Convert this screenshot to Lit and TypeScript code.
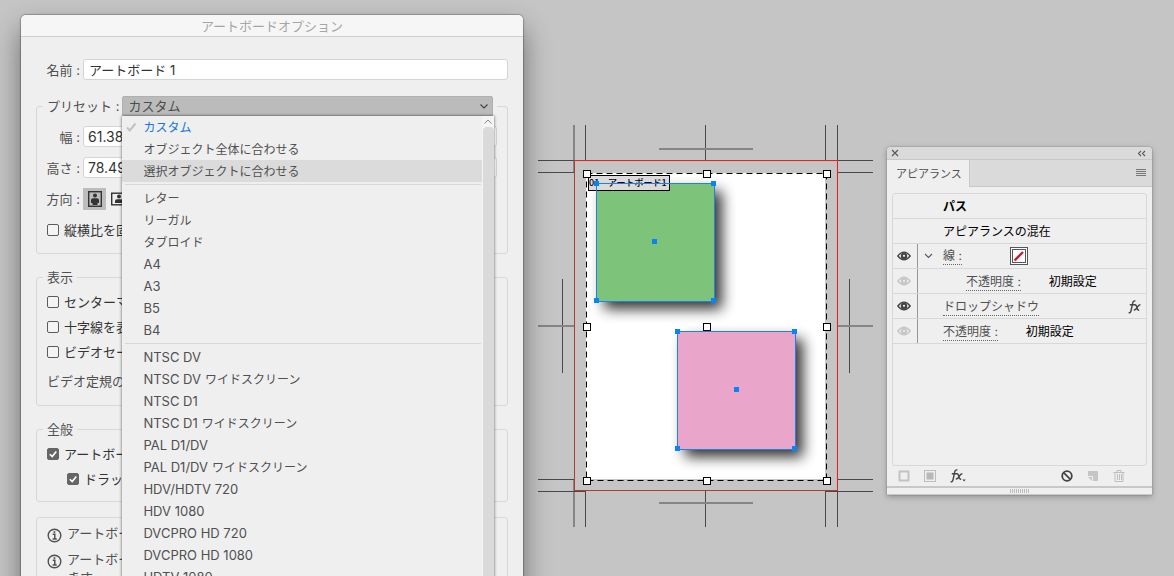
import { LitElement, html, css, svg } from "lit";
import { customElement } from "lit/decorators.js";
import { classMap } from "lit/directives/class-map.js";

const FONT = css`Inter, "Noto Sans CJK JP", sans-serif`;

@customElement("artboard-canvas")
class ArtboardCanvas extends LitElement {
  static styles = css`
    :host { display: block; }
    svg { display: block; width: 350px; height: 420px; }
    .thin { stroke: #4a4848; stroke-width: 1; }
    .thick { stroke: #868484; stroke-width: 2; }
    .bleed { fill: none; stroke: #b23a36; stroke-width: 1; }
    .glow { fill: none; stroke: #f3a9a5; stroke-width: 1; }
    .page { fill: #fff; }
    .dash { fill: none; stroke: #000; stroke-width: 1; stroke-dasharray: 6 4; }
    .handle { fill: #fff; stroke: #000; stroke-width: 1; }
    .sel { fill: none; stroke: #1a82e8; stroke-width: 1; }
    .pin { fill: #0a84f5; }
    .green { fill: #7dc379; }
    .pink { fill: #eaa6ca; }
    .tag { fill: #dcdadb; stroke: #000; stroke-width: 1; }
    .tagtext { font: 500 9px "Noto Sans CJK JP", sans-serif; fill: #000; }
    .shade { fill: #000; opacity: 0.8; }
  `;

  private marks: [string, number, number, number, number][] = [
    ["thick", 574, 125, 574, 172], ["thin", 585.5, 125, 585.5, 160],
    ["thin", 705.5, 125, 705.5, 160], ["thin", 825.5, 125, 825.5, 160],
    ["thin", 837.5, 125, 837.5, 160], ["thick", 659, 149, 753, 149],
    ["thin", 538, 160.5, 574, 160.5], ["thin", 538, 172.5, 574, 172.5],
    ["thin", 838, 160.5, 873, 160.5], ["thin", 838, 172.5, 873, 172.5],
    ["thick", 574, 480, 574, 527], ["thin", 585.5, 491, 585.5, 527],
    ["thin", 705.5, 491, 705.5, 527], ["thin", 825.5, 491, 825.5, 527],
    ["thin", 837.5, 491, 837.5, 527], ["thick", 659, 503, 753, 503],
    ["thin", 538, 479.5, 574, 479.5], ["thin", 538, 491.5, 586, 491.5],
    ["thin", 838, 479.5, 873, 479.5], ["thin", 826, 491.5, 873, 491.5],
    ["thin", 562.5, 279, 562.5, 373], ["thick", 538, 326, 574, 326],
    ["thin", 849.5, 279, 849.5, 373], ["thick", 838, 326, 873, 326],
  ];

  private fill(kind: string, x: number, y: number) {
    return svg`
      <rect class="shade" x=${x + 7} y=${y + 7} width="118" height="118" filter="url(#soft)"></rect>
      <rect class=${kind} x=${x} y=${y} width="118" height="118"></rect>`;
  }
  private outline(x: number, y: number, mid: number) {
    const pins = [[0, 0], [117, 0], [0, 117], [117, 117], [mid, 58]];
    return svg`
      <rect class="sel" x=${x - 0.5} y=${y - 0.5} width="118" height="118"></rect>
      ${pins.map(([dx, dy]) => svg`<rect class="pin" x=${x + dx - 3} y=${y + dy - 3} width="5" height="5"></rect>`)}`;
  }

  render() {
    return html`<svg viewBox="530 115 350 420" role="img" aria-label="アートボード 1">
      <defs>
        <filter id="soft" x="-20%" y="-20%" width="140%" height="140%">
          <feGaussianBlur stdDeviation="7"></feGaussianBlur>
        </filter>
      </defs>
      ${this.marks.map(([c, a, b, d, e]) => svg`<line class=${c} x1=${a} y1=${b} x2=${d} y2=${e}></line>`)}
      <path class="glow" d="M575 161.5H836.5V490"></path>
      <rect class="bleed" x="574.5" y="160.5" width="263" height="330"></rect>
      <rect class="page" x="586" y="173" width="239" height="306"></rect>
      ${this.fill("green", 597, 184)}
      ${this.fill("pink", 678, 332)}
      <rect class="tag" x="588.5" y="175.5" width="81" height="15"></rect>
      <text class="tagtext" x="589" y="186">01</text>
      <text class="tagtext" x="608" y="186">アートボード1</text>
      ${this.outline(597, 184, 58)}
      ${this.outline(678, 332, 59)}
      <rect class="dash" x="586.5" y="173.5" width="240" height="307"></rect>
      ${[[587, 174], [707, 174], [827, 174], [587, 327], [707, 327], [827, 327], [587, 481], [707, 481], [827, 481]].map(([x, y]) =>
        svg`<rect class="handle" x=${x - 3.5} y=${y - 3.5} width="7" height="7"></rect>`)}
    </svg>`;
  }
}

@customElement("preset-menu")
class PresetMenu extends LitElement {
  static styles = css`
    :host { display: flex; background: #efefef; box-shadow: 0 0 3px rgba(0, 0, 0, 0.6); font: 12px/22px ${FONT}; color: #505050; }
    .list { flex: 1; margin: 0; padding: 0; list-style: none; }
    .item { display: flex; align-items: center; gap: 4px; height: 22px; padding-left: 3px; white-space: nowrap; }
    .mark { width: 14px; height: 12px; }
    .latin { font-size: 13px; }
    .kana { padding-top: 2px; }
    .on { color: #1576dc; }
    .hover { background: #dbdbdb; }
    .rule { height: 1px; margin: 2px 1px 2px 3px; background: #d8d8d8; }
    .track { display: flex; flex-direction: column; width: 12px; background: #f4f4f4; }
    .up { height: 11px; width: 12px; }
    .thumb { flex: 1; margin-left: 1px; border-radius: 4px 4px 0 0; background: #dadada; }
  `;

  private groups: string[][][] = [
    [["", "カスタム"], ["", "オブジェクト全体に合わせる"], ["", "選択オブジェクトに合わせる"]],
    [["", "レター"], ["", "リーガル"], ["", "タブロイド"], ["A4"], ["A3"], ["B5"], ["B4"]],
    [["NTSC DV"], ["NTSC DV", "ワイドスクリーン"], ["NTSC D1"], ["NTSC D1", "ワイドスクリーン"], ["PAL D1/DV"],
      ["PAL D1/DV", "ワイドスクリーン"], ["HDV/HDTV 720"], ["HDV 1080"], ["DVCPRO HD 720"], ["DVCPRO HD 1080"], ["HDTV 1080"]],
  ];

  render() {
    return html`
      <ul class="list" role="listbox" aria-label="プリセット">
        ${this.groups.map((g, gi) => html`
          ${gi ? html`<li class="rule" role="separator"></li>` : ""}
          ${g.map(([latin, kana], i) => html`<li role="option" aria-selected=${gi + i === 0}
            class=${classMap({ item: true, on: gi === 0 && i === 0, hover: gi === 0 && i === 2 })}>
            <svg class="mark" viewBox="0 0 14 12">${gi === 0 && i === 0
              ? svg`<path d="M2 6.5L4.8 9.5L10.5 2.5" fill="none" stroke="#c2c2c2" stroke-width="2"></path>` : ""}</svg>
            ${latin ? html`<span class="latin">${latin}</span>` : ""}${kana ? html`<span class="kana">${kana}</span>` : ""}</li>`)}`)}
      </ul>
      <div class="track">
        <svg class="up" viewBox="0 0 12 11"><path d="M2.5 7.5L6 4L9.5 7.5" fill="none" stroke="#8a8a8a"></path></svg>
        <div class="thumb"></div>
      </div>`;
  }
}

@customElement("artboard-dialog")
class ArtboardDialog extends LitElement {
  static styles = css`
    :host { display: block; background: #efefef; border-radius: 5px 5px 0 0; font: 13px/20px ${FONT}; color: #505050;
      box-shadow: 0 0 1px 1px rgba(0, 0, 0, 0.25), 0 14px 28px rgba(0, 0, 0, 0.45); }
    * { box-sizing: border-box; }
    .title { margin: 0; height: 22px; border-bottom: 1px solid #cfcfcf; border-radius: 5px 5px 0 0; background: #f6f6f6;
      font-size: 13px; line-height: 22px; font-weight: 400; text-align: center; color: #a6a6a6; }
    .body { display: flex; flex-direction: column; padding: 22px 15px; }
    .row { display: flex; align-items: center; height: 21px; }
    .cap { width: 47px; padding-right: 3px; text-align: right; white-space: nowrap; }
    .in .cap { width: 46px; }
    .in .row { padding-right: 10px; }
    .box { flex: 1; min-width: 0; height: 21px; padding: 0 5px; border: 1px solid #d4d4d4; border-radius: 3px; background: #fff;
      font: inherit; color: #333; }
    .num { padding: 0 4px; font-size: 14px; }
    .group { min-width: 0; margin: 0; border: 1px solid #d8d8d8; border-radius: 3px; padding: 0; }
    .g1 { margin-top: 16px; }
    .g2, .g3 { margin-top: 13px; }
    .in { display: flex; flex-direction: column; gap: 10px; padding-top: 10px; }
    .legend { height: 20px; margin-left: 6px; padding: 0 4px; }
    .wide { width: calc(100% - 16px); }
    .pick { display: flex; align-items: center; gap: 3px; white-space: nowrap; }
    .field { position: relative; flex: 1; display: flex; }
    .select { flex: 1; appearance: none; height: 20px; margin: 0; padding: 0 5px; border: 1px solid #b0b0b0; border-radius: 2px 2px 0 0;
      background: #bbb; font: inherit; line-height: 18px; color: #4c4c4c; }
    .arrow { position: absolute; right: 4px; top: 5px; width: 10px; height: 10px; pointer-events: none; }
    .menu { position: absolute; z-index: 2; left: 0; right: -1px; top: 20px; }
    .btn { width: 23px; height: 22px; padding: 0; border: 0; background: none; }
    .btn.on { background: #bdbdbd; }
    .btn svg { display: block; margin: auto; }
    .check { display: flex; align-items: center; gap: 5px; height: 20px; padding-left: 10px; white-space: nowrap; overflow: hidden; color: #333; }
    .tick { appearance: none; flex: none; width: 12px; height: 12px; margin: 0; border: 1px solid #5c5c5c; border-radius: 2px; background: #f4f4f4; }
    .tick:checked { border-color: #666; background: #666 url("data:image/svg+xml,%3Csvg xmlns='http://www.w3.org/2000/svg' viewBox='0 0 10 10'%3E%3Cpath d='M1.8 5.2L4.2 7.6L8.3 2.4' fill='none' stroke='white' stroke-width='1.6'/%3E%3C/svg%3E"); }
    .lock { margin-top: 11px; margin-bottom: 13px; }
    .stack { display: flex; flex-direction: column; gap: 5px; }
    .show { padding-top: 5px; padding-bottom: 14px; }
    .note { margin: 4px 0 0; padding-left: 10px; height: 20px; }
    .general { padding-top: 5px; padding-bottom: 12px; }
    .sub { padding-left: 30px; }
    .info { display: flex; flex-direction: column; gap: 7px; margin-top: 15px; padding: 6px 10px 10px; }
    .hint { display: flex; gap: 5px; margin: 0; line-height: 18px; }
    .hint svg { flex: none; margin-top: 4px; }
  `;

  private tick(text: string, on = false, extra = "") {
    return html`<label class="check ${extra}"><input class="tick" type="checkbox" ?checked=${on}>${text}</label>`;
  }
  private hint(text: string) {
    return html`<p class="hint"><svg width="15" height="15" viewBox="0 0 15 15" fill="none" stroke="#505050">
      <circle cx="7.5" cy="7.5" r="6.3" stroke-width="1.4"></circle>
      <path d="M5.7 6.2H7.8V11M5.6 11H9.8" stroke-width="1.5"></path><path d="M6.6 4H8.3" stroke-width="1.7"></path></svg>
      <span>${text}</span></p>`;
  }

  render() {
    return html`
      <h1 class="title">アートボードオプション</h1>
      <form class="body">
        <div class="row"><label class="cap" for="name">名前 :</label><input class="box" id="name" value="アートボード 1"></div>
        <fieldset class="group g1">
          <legend class="legend wide"><div class="pick"><label for="preset">プリセット :</label>
            <div class="field">
              <select class="select" id="preset"><option>カスタム</option></select>
              <svg class="arrow" viewBox="0 0 10 10"><path d="M1.5 3.5L5 7L8.5 3.5" fill="none" stroke="#444" stroke-width="1.2"></path></svg>
              <preset-menu class="menu"></preset-menu>
            </div></div></legend>
          <div class="in">
            <div class="row"><label class="cap" for="w">幅 :</label><input class="box num" id="w" value="61.383 mm"></div>
            <div class="row"><label class="cap" for="h">高さ :</label><input class="box num" id="h" value="78.493 mm"></div>
            <div class="row"><span class="cap">方向 :</span>
              <button class="btn on" type="button" aria-label="縦"><svg width="14" height="16" viewBox="0 0 14 16">
                <rect x="0.7" y="0.7" width="12.6" height="14.6" fill="none" stroke="#333" stroke-width="1.4"></rect>
                <circle cx="7" cy="4.6" r="2" fill="#333"></circle><path d="M3 9Q3 7.2 5 7.2H9Q11 7.2 11 9V12H9.5V14H4.5V12H3Z" fill="#333"></path></svg></button>
              <button class="btn" type="button" aria-label="横"><svg width="14" height="14" viewBox="0 0 14 14">
                <rect x="0.7" y="1.2" width="12.6" height="11.6" fill="none" stroke="#333" stroke-width="1.4"></rect>
                <circle cx="8" cy="4.6" r="2" fill="#333"></circle><path d="M4 9Q4 7.2 6 7.2H10Q12 7.2 12 9V11H4Z" fill="#333"></path></svg></button>
            </div>
          </div>
          ${this.tick("縦横比を固定", false, "lock")}
        </fieldset>
        <fieldset class="group g2"><legend class="legend">表示</legend>
          <div class="stack show">
            ${this.tick("センターマークを表示")}${this.tick("十字線を表示")}${this.tick("ビデオセーフエリアを表示")}
            <p class="note">ビデオ定規のピクセル縦横比 : 1</p>
          </div>
        </fieldset>
        <fieldset class="group g3"><legend class="legend">全般</legend>
          <div class="stack general">
            ${this.tick("アートボード以外の領域を暗くする", true)}${this.tick("ドラッグ中に更新", true, "sub")}
          </div>
        </fieldset>
        <section class="group info">
          ${this.hint("アートボード内に作成するには、Shift キーを押します。")}
          ${this.hint("アートボードをアートボードパネルでクリックすると、アクティブになります。")}
        </section>
      </form>`;
  }
}

@customElement("appearance-panel")
class AppearancePanel extends LitElement {
  static styles = css`
    :host { display: flex; flex-direction: column; box-sizing: border-box; background: #efefef; border-radius: 4px 4px 0 0;
      font: 12px/24px ${FONT}; color: #505050; box-shadow: 0 0 2px rgba(0, 0, 0, 0.3), 0 2px 6px rgba(0, 0, 0, 0.25); }
    * { box-sizing: border-box; }
    svg { display: block; }
    button { display: flex; padding: 0; border: 0; background: none; color: inherit; font: inherit; }
    .bar { display: flex; align-items: center; justify-content: space-between; height: 13px; padding: 0 6px 0 4px;
      border-bottom: 1px solid #c8c8c8; border-radius: 4px 4px 0 0; background: #dadada; }
    .tabs { display: flex; align-items: center; justify-content: space-between; height: 27px; padding-right: 6px; background: #dadada;
      border-bottom: 1px solid #c8c8c8; }
    .tab { height: 27px; width: 83px; align-items: center; padding: 2px 0 0 9px; border-right: 1px solid #c8c8c8; background: #efefef; font-size: 11px; white-space: nowrap; }
    .list { flex: 1; margin: 6px 5px 0; padding: 0; list-style: none; border: 1px solid #d8d8d8; border-radius: 3px; }
    .item { display: flex; height: 25px; border-bottom: 1px solid #d8d8d8; color: #000; white-space: nowrap; }
    .eye { display: flex; align-items: center; width: 25px; padding-left: 4px; border-right: 1px solid transparent; }
    .eye.line { border-right-color: #969696; }
    .main { flex: 1; display: flex; align-items: center; padding: 2px 5px 0 25px; }
    .main.deep { padding-left: 48px; }
    .main.open { padding: 0 0 0 6px; gap: 10px; }
    .bold { font-weight: 700; }
    .link { color: #505050; line-height: 16px; border-bottom: 1px dotted #666; }
    .value { margin-left: 28px; }
    .swatch { margin-left: 38px; }
    .fx { margin-left: auto; }
    .foot { display: flex; align-items: center; gap: 14px; height: 20px; padding: 0 27px 0 11px; }
    .push { margin-left: auto; }
    .grip { display: flex; justify-content: center; height: 9px; border-top: 2px solid #c8c8c8; border-bottom: 1px solid #c8c8c8; }
  `;

  private eye(on: boolean) {
    const c = on ? "#444" : "#c6c6c6";
    return html`<button aria-label="表示"><svg width="14" height="10" viewBox="0 0 14 10">
      <path d="M0.8 5Q7 -2.6 13.2 5Q7 12.6 0.8 5Z" fill="none" stroke=${c} stroke-width="1.3"></path>
      <circle cx="7" cy="5" r="3.2" fill=${c}></circle><circle cx="7" cy="4.8" r="1.1" fill="#efefef"></circle></svg></button>`;
  }
  private fx(dot = false) {
    return html`<svg width=${dot ? 16 : 13} height="14" viewBox="0 0 ${dot ? 16 : 13} 14" fill="none" stroke="#444" stroke-width="1.4">
      <path d="M7.4 1Q5.2 0.2 4.6 3.4L3.1 10.5Q2.6 13.2 0.6 12.6M1.8 4.8H6.8M6.6 4.8Q8.2 4.4 8.8 7.4T11.2 10.2M12.4 4.7Q10.8 4.6 9.2 7.4T5.8 10.3"></path>
      ${dot ? svg`<path d="M12.4 10.4H15.8L14.1 12.4Z" fill="#444" stroke="none"></path>` : ""}</svg>`;
  }

  render() {
    return html`
      <div class="bar">
        <button aria-label="閉じる"><svg width="8" height="8" viewBox="0 0 8 8"><path d="M1 1L7 7M7 1L1 7" stroke="#555" stroke-width="1.1"></path></svg></button>
        <button aria-label="折りたたむ"><svg width="9" height="7" viewBox="0 0 9 7"><path d="M4 1L1.5 3.5L4 6M8 1L5.5 3.5L8 6" fill="none" stroke="#555" stroke-width="1.1"></path></svg></button>
      </div>
      <div class="tabs">
        <button class="tab">アピアランス</button>
        <button aria-label="メニュー"><svg width="10" height="8" viewBox="0 0 10 8"><path d="M0 0.5H10M0 2.5H10M0 4.5H10M0 6.5H10" stroke="#777"></path></svg></button>
      </div>
      <ul class="list">
        <li class="item bold"><span class="eye"></span><span class="main">パス</span></li>
        <li class="item"><span class="eye"></span><span class="main">アピアランスの混在</span></li>
        <li class="item"><span class="eye line">${this.eye(true)}</span><span class="main open">
          <svg width="9" height="6" viewBox="0 0 9 6"><path d="M1 1L4.5 4.5L8 1" fill="none" stroke="#555" stroke-width="1.1"></path></svg>
          <span class="link">線 :</span><button class="swatch" aria-label="線のカラー"><svg width="18" height="18" viewBox="0 0 18 18">
            <rect x="0.5" y="0.5" width="17" height="17" fill="#fff" stroke="#555"></rect><rect x="2.5" y="2.5" width="13" height="13" fill="#fff" stroke="#555"></rect>
            <path d="M4.5 13.5L13 5" stroke="#c0202f" stroke-width="2.4"></path></svg></button></span></li>
        <li class="item"><span class="eye line">${this.eye(false)}</span><span class="main deep"><span class="link">不透明度 :</span><span class="value">初期設定</span></span></li>
        <li class="item"><span class="eye line">${this.eye(true)}</span><span class="main"><span class="link">ドロップシャドウ</span><span class="fx">${this.fx()}</span></span></li>
        <li class="item"><span class="eye line">${this.eye(false)}</span><span class="main"><span class="link">不透明度 :</span><span class="value">初期設定</span></span></li>
      </ul>
      <div class="foot">
        <button aria-label="新規線"><svg width="12" height="12" viewBox="0 0 12 12"><rect x="1.5" y="1.5" width="9" height="9" fill="none" stroke="#c2c2c2" stroke-width="2"></rect></svg></button>
        <button aria-label="新規塗り"><svg width="12" height="12" viewBox="0 0 12 12"><rect x="0.5" y="0.5" width="11" height="11" fill="none" stroke="#bdbdbd"></rect><rect x="2.5" y="2.5" width="7" height="7" fill="#b8b8b8"></rect></svg></button>
        <button aria-label="新規効果">${this.fx(true)}</button>
        <button class="push" aria-label="消去"><svg width="12" height="12" viewBox="0 0 12 12"><circle cx="6" cy="6" r="4.8" fill="none" stroke="#444" stroke-width="1.8"></circle><path d="M2.6 2.6L9.4 9.4" stroke="#444" stroke-width="1.8"></path></svg></button>
        <button aria-label="複製"><svg width="12" height="12" viewBox="0 0 12 12"><path d="M1 1H11V11H6V6H1Z" fill="#c6c6c6"></path><path d="M1 7H5V11Z" fill="#c6c6c6"></path></svg></button>
        <button aria-label="削除"><svg width="12" height="12" viewBox="0 0 12 12" fill="none" stroke="#bebebe"><path d="M0.5 2.5H11.5M4 2V0.5H8V2M2 3V11.5H10V3M4.5 4V10M6.5 4V10M8.5 4V10"></path></svg></button>
      </div>
      <div class="grip"><svg width="19" height="6" viewBox="0 0 19 6"><path d="M0.5 1V5M2.5 1V5M4.5 1V5M6.5 1V5M8.5 1V5M10.5 1V5M12.5 1V5M14.5 1V5M16.5 1V5M18.5 1V5" stroke="#bdbdbd"></path></svg></div>`;
  }
}

@customElement("app-root")
class AppRoot extends LitElement {
  static styles = css`
    :host { display: block; position: relative; height: 100vh; overflow: hidden; background: #c5c5c5; }
    .canvas { position: absolute; left: 530px; top: 115px; }
    .dialog { position: absolute; left: 21px; top: 15px; width: 502px; }
    .panel { position: absolute; left: 887px; top: 147px; width: 265px; height: 348px; }
  `;
  render() {
    return html`
      <artboard-canvas class="canvas"></artboard-canvas>
      <artboard-dialog class="dialog"></artboard-dialog>
      <appearance-panel class="panel"></appearance-panel>`;
  }
}
